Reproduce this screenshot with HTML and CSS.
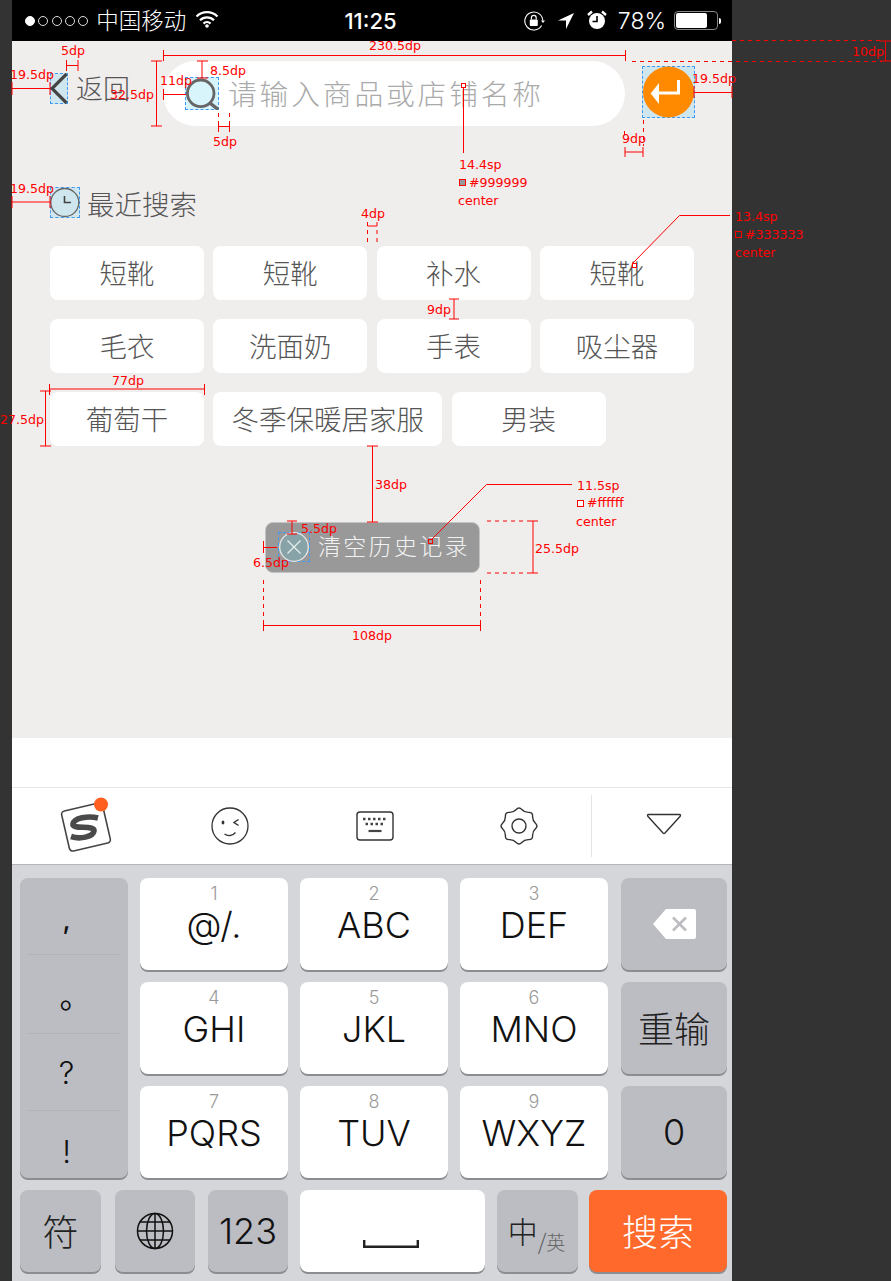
FILE: index.html
```html
<!DOCTYPE html>
<html lang="zh">
<head>
<meta charset="utf-8">
<title>搜索</title>
<link rel="stylesheet" href="styles.css">
</head>
<body>
<div class="phone">
  <div class="status">
    <div class="status-left">
      <div class="dots"><i class="dot on"></i><i class="dot"></i><i class="dot"></i><i class="dot"></i><i class="dot"></i></div>
      <span class="carrier">中国移动</span>
      <svg class="wifi" viewBox="0 0 24 18"><path d="M1.500 6.500a15 15 0 0 1 21 0M5 10.200a10 10 0 0 1 14 0M8.500 13.600a5 5 0 0 1 7 0" fill="none" stroke="#fff" stroke-width="2.200"/><circle cx="12" cy="16" r="1.800" fill="#fff"/></svg>
    </div>
    <span class="time">11:25</span>
    <div class="status-right">
      <svg class="st-lock" viewBox="0 0 22 20"><path d="M17.600 14.500A9 9 0 1 1 18.800 9.500" fill="none" stroke="#fff" stroke-width="1.100"/><path d="M17 9.500h4l-2 2.400z" fill="#fff"/><rect x="5.800" y="8.500" width="8" height="6.500" rx="1" fill="#fff"/><path d="M7.400 8.500V6.800a2.400 2.400 0 0 1 4.800 0v1.700" fill="none" stroke="#fff" stroke-width="1.200"/></svg>
      <svg class="st-arrow" viewBox="0 0 16 16"><path d="M16 0 0 7.500h8V16z" fill="#fff"/></svg>
      <svg class="st-alarm" viewBox="0 0 20 20"><circle cx="10" cy="11" r="8" fill="#fff"/><path d="M1 5 5 1.500M19 5l-4-3.500" stroke="#fff" stroke-width="2.400"/><path d="M10 6v5.500H5.500" fill="none" stroke="#000" stroke-width="1.600"/></svg>
      <span class="percent">78%</span>
      <div class="battery"><div class="battery-fill"></div></div>
      <div class="battery-nub"></div>
    </div>
  </div>

  <main class="content">
    <div class="search-row">
      <div class="spec-box back-box">
        <svg class="fill-icon" viewBox="0 0 18 31"><path d="M16.500 1 2 15.500 16.500 30" fill="none" stroke="#444" stroke-width="3.200"/></svg>
      </div>
      <span class="back-text">返回</span>
      <div class="pill">
        <div class="spec-box search-box">
          <svg class="fill-icon" viewBox="0 0 34 33"><circle cx="15.700" cy="16.300" r="13.300" fill="#d8f5fc" stroke="#666" stroke-width="2.800"/><path d="M25 26l8 6.500" stroke="#666" stroke-width="3.400"/></svg>
        </div>
        <span class="placeholder">请输入商品或店铺名称</span>
      </div>
      <div class="spec-box enter-box">
        <svg class="fill-icon" viewBox="0 0 53 52"><circle cx="26.500" cy="26" r="25.500" fill="#ff8a00"/><path d="M8.700 27.500 17 17v21z" fill="#fff"/><path d="M16 27h20.500V14" fill="none" stroke="#fff" stroke-width="3"/></svg>
      </div>
    </div>

    <div class="recent">
      <div class="spec-box clock-box">
        <svg class="fill-icon" viewBox="0 0 30 31"><circle cx="14.800" cy="15.500" r="14" fill="#cfe6ee" stroke="#666" stroke-width="1.300"/><path d="M14.500 9v6.500H21" fill="none" stroke="#444" stroke-width="1.600"/></svg>
      </div>
      <span class="recent-title">最近搜索</span>
    </div>

    <div class="tags">
      <span class="tag">短靴</span><span class="tag">短靴</span><span class="tag">补水</span><span class="tag">短靴</span>
      <span class="tag">毛衣</span><span class="tag">洗面奶</span><span class="tag">手表</span><span class="tag">吸尘器</span>
      <span class="tag">葡萄干</span><span class="tag tag-wide">冬季保暖居家服</span><span class="tag">男装</span>
    </div>

    <div class="clear">
      <div class="spec-box clear-box">
        <svg class="fill-icon" viewBox="0 0 32 30"><circle cx="16" cy="15" r="14.300" fill="#88a3a8" stroke="#e6e6e6" stroke-width="1.300"/><path d="M9.500 8.500l13 13M22.500 8.500l-13 13" stroke="#e6eeee" stroke-width="1.200"/></svg>
      </div>
      <span class="clear-text">清空历史记录</span>
    </div>
  </main>

  <div class="gap-white"></div>

  <div class="toolbar">
    <div class="tool">
      <svg class="tool-logo" viewBox="0 0 56 60"><rect x="7" y="9.500" width="42" height="41" rx="3.500" transform="rotate(-13 28 30)" fill="#fff" stroke="#444" stroke-width="1.600"/><path d="M40 21C30 18.500 16 21 15 27 14 33 37 27.500 36 34 35 40 22 42.500 13 39.500" fill="none" stroke="#4a4a4a" stroke-width="5.600"/><circle cx="43" cy="7.500" r="7" fill="#ff5f1f"/></svg>
    </div>
    <div class="tool">
      <svg class="tool-icon" viewBox="0 0 38 38"><circle cx="19" cy="19" r="18" fill="none" stroke="#333" stroke-width="1.300"/><ellipse cx="12" cy="15.500" rx="1.400" ry="2" fill="#333"/><path d="M27.500 12.500 23 15.500l4.500 3" fill="none" stroke="#333" stroke-width="1.500"/><path d="M13.500 27c3.500 2.500 8 2 11-1.500" fill="none" stroke="#333" stroke-width="1.300"/></svg>
    </div>
    <div class="tool">
      <svg class="tool-kbd" viewBox="0 0 38 30"><rect x="1" y="1" width="36" height="28" rx="3" fill="none" stroke="#333" stroke-width="1.400"/><path d="M7 8h24M9.500 13h19" fill="none" stroke="#444" stroke-width="2.400" stroke-dasharray="2.500 2.500"/><path d="M12.500 20h13" stroke="#444" stroke-width="2.200"/></svg>
    </div>
    <div class="tool">
      <svg class="tool-icon" viewBox="0 0 38 38"><path d="M16.220 2.550Q19 -.5 21.780 2.550Q24.550 5.600 28.670 5.400Q32.790 5.210 32.600 9.330Q32.400 13.450 35.450 16.220Q38.500 19 35.450 21.780Q32.400 24.550 32.600 28.670Q32.790 32.790 28.670 32.600Q24.550 32.400 21.780 35.450Q19 38.500 16.220 35.450Q13.450 32.400 9.330 32.600Q5.210 32.790 5.400 28.670Q5.600 24.550 2.550 21.780Q-.5 19 2.550 16.220Q5.600 13.450 5.400 9.330Q5.210 5.210 9.330 5.400Q13.450 5.600 16.220 2.550Z" fill="none" stroke="#333" stroke-width="1.400"/><circle cx="19" cy="19" r="7" fill="none" stroke="#333" stroke-width="1.400"/></svg>
    </div>
    <div class="tool tool-last">
      <svg class="tool-tri" viewBox="0 0 36 22"><path d="M2.500 1.500h31a1 1 0 0 1 .7 1.700L19 20a1.500 1.500 0 0 1-2 0L1.800 3.200a1 1 0 0 1 .7-1.700z" fill="none" stroke="#333" stroke-width="1.400"/></svg>
    </div>
  </div>

  <div class="keyboard">
    <div class="keys-top">
      <div class="side-key">
        <span class="side-cell sc-comma">,</span>
        <span class="side-cell sc-period">。</span>
        <span class="side-cell sc-q">?</span>
        <span class="side-cell sc-ex">!</span>
      </div>
      <div class="keys-grid">
        <div class="key"><span class="digit">1</span><span class="label">@/.</span></div>
        <div class="key"><span class="digit">2</span><span class="label">ABC</span></div>
        <div class="key"><span class="digit">3</span><span class="label">DEF</span></div>
        <div class="key key-gray key-center">
          <svg class="backspace" viewBox="0 0 43 30"><path d="M13 0h28a2 2 0 0 1 2 2v26a2 2 0 0 1-2 2H13L0 15z" fill="#fff"/><path d="M20 8.500l13 13M33 8.500l-13 13" stroke="#bcbdc2" stroke-width="2.600"/></svg>
        </div>
        <div class="key"><span class="digit">4</span><span class="label">GHI</span></div>
        <div class="key"><span class="digit">5</span><span class="label">JKL</span></div>
        <div class="key"><span class="digit">6</span><span class="label">MNO</span></div>
        <div class="key key-gray key-center"><span class="label-cjk">重输</span></div>
        <div class="key"><span class="digit">7</span><span class="label">PQRS</span></div>
        <div class="key"><span class="digit">8</span><span class="label">TUV</span></div>
        <div class="key"><span class="digit">9</span><span class="label">WXYZ</span></div>
        <div class="key key-gray key-center"><span class="label">0</span></div>
      </div>
    </div>
    <div class="keys-bottom">
      <div class="key key-gray key-center k-fu"><span class="label-cjk">符</span></div>
      <div class="key key-gray key-center k-globe">
        <svg class="globe" viewBox="0 0 38 38"><g fill="none" stroke="#111" stroke-width="1.500"><circle cx="19" cy="19" r="17.500"/><ellipse cx="19" cy="19" rx="8.500" ry="17.500"/><path d="M19 1.500v35M1.500 19h35M4 10h30M4 28h30"/></g></svg>
      </div>
      <div class="key key-gray key-center k-num"><span class="label">123</span></div>
      <div class="key key-center k-space"><svg class="space-glyph" viewBox="0 0 56 8"><path d="M1.200 0v6.800h53.600V0" fill="none" stroke="#222" stroke-width="2.400"/></svg></div>
      <div class="key key-gray key-center k-lang"><span class="lang-main">中</span><span class="lang-slash">/</span><span class="lang-sub">英</span></div>
      <div class="key key-center k-go"><span class="go-text">搜索</span></div>
    </div>
  </div>
</div>

<svg class="redlines" viewBox="0 0 891 1281" width="891" height="1281">
  <g class="rl">
    <path d="M163.500 55.500H625.500M163.500 50V61M625.500 50V61"/>
    <path d="M66.500 65.500H78M66.500 60V71M78 60V71"/>
    <path d="M12 88.500H50M12 82V95M50 82V95"/>
    <path d="M156.500 61V126M151 61H162M151 126H162"/>
    <path d="M163.500 94.500H186M163.500 89V100"/>
    <path d="M202 61V78M197 61H208M197 78H208"/>
    <path d="M218.500 126.500H229.500M218.500 121V132M229.500 121V132"/>
    <path d="M463.500 87V153"/>
    <path d="M694 92.500H732M694 86V98M732 86V98"/>
    <path d="M625 152H643M625 147V157M643 147V157"/>
    <path d="M12 202H50M12 196V208M50 196V208"/>
    <path d="M367.500 226H377"/>
    <path d="M633 263 679.500 215.500H730"/>
    <path d="M454 299V319M449 299H459M449 319H459"/>
    <path d="M49.500 389H204.500M49.500 384V395M204.500 384V395"/>
    <path d="M45.500 391V446M40 391H51M40 446H51"/>
    <path d="M372.500 446V522M367 446H378M367 522H378"/>
    <path d="M431 540 486.500 484.500H572"/>
    <path d="M292 521V534M287 521H297M287 534H297"/>
    <path d="M263.500 547.500H277M263.500 541V553"/>
    <path d="M533 521V573M528 521H538M528 573H538"/>
    <path d="M263.500 625.500H480.500M263.500 620V631M480.500 620V631"/>
    <path d="M885.500 41V61M880 41H891M880 61H891"/>
  </g>
  <g class="rl-dash">
    <path d="M732 40.500H882M632 61.500H882"/>
    <path d="M218.500 113V121M229.500 113V121"/>
    <path d="M643.500 120V146M624.500 131V140"/>
    <path d="M367.500 222V242M377 222V242"/>
    <path d="M487 521H528M487 573H528"/>
    <path d="M263.500 580V620M480.500 580V620"/>
  </g>
  <g class="rl-sq">
    <rect x="461.500" y="83.500" width="4" height="4" fill="#fff"/>
    <rect x="459.500" y="179.500" width="6" height="6" fill="#999"/>
    <rect x="632.500" y="263.500" width="4" height="4" fill="#fff"/>
    <rect x="735.500" y="231.500" width="6" height="6" fill="#333"/>
    <rect x="428.500" y="539.500" width="4" height="4" fill="#999"/>
    <rect x="577.500" y="500.500" width="6" height="6" fill="#fff"/>
  </g>
  <g class="rl-text">
    <text x="369" y="50">230.5dp</text>
    <text x="61" y="55">5dp</text>
    <text x="10" y="79">19.5dp</text>
    <text x="110" y="99">32.5dp</text>
    <text x="160" y="85">11dp</text>
    <text x="210" y="75">8.5dp</text>
    <text x="213" y="146">5dp</text>
    <text x="459" y="169">14.4sp</text>
    <text x="469" y="187">#999999</text>
    <text x="458" y="205">center</text>
    <text x="692" y="83">19.5dp</text>
    <text x="622" y="143">9dp</text>
    <text x="852" y="56">10dp</text>
    <text x="10" y="193">19.5dp</text>
    <text x="361" y="218">4dp</text>
    <text x="735" y="221">13.4sp</text>
    <text x="745" y="239">#333333</text>
    <text x="735" y="257">center</text>
    <text x="427" y="314">9dp</text>
    <text x="112" y="385">77dp</text>
    <text x="0" y="424">27.5dp</text>
    <text x="375" y="489">38dp</text>
    <text x="577" y="490">11.5sp</text>
    <text x="587" y="507">#ffffff</text>
    <text x="576" y="526">center</text>
    <text x="301" y="533">5.5dp</text>
    <text x="253" y="567">6.5dp</text>
    <text x="535" y="553">25.5dp</text>
    <text x="352" y="640">108dp</text>
  </g>
</svg>
</body>
</html>
```

FILE: styles.css
```css
* { box-sizing: border-box; }
html, body { margin: 0; padding: 0; }
body {
  position: relative;
  width: 891px;
  height: 1281px;
  overflow: hidden;
  background: #333;
  font-family: "Noto Sans CJK SC", "Noto Sans", sans-serif;
}
.phone {
  width: 720px;
  margin-left: 12px;
  display: flex;
  flex-direction: column;
  height: 1281px;
}

/* status bar */
.status {
  height: 41px;
  flex: none;
  background: #000;
  color: #fff;
  display: flex;
  align-items: center;
  padding: 0 11px 0 13px;
}
.status-left, .status-right { flex: 1; display: flex; align-items: center; }
.status-right { justify-content: flex-end; }
.dots { display: flex; gap: 3.300px; }
.dot { width: 10px; height: 10px; border-radius: 50%; border: 1px solid #ddd; }
.dot.on { background: #fff; border-color: #fff; }
.carrier { font-size: 22.500px; font-weight: 300; margin-left: 8px; line-height: 26px; padding-bottom: 4px; }
.wifi { width: 24px; height: 18px; margin-left: 9px; margin-top: -3px; }
.time { font-family: Inter, sans-serif; font-size: 22px; font-weight: 500; margin-right: 5px; }
.st-lock { width: 22px; height: 20px; }
.st-arrow { width: 16px; height: 16px; margin-left: 12px; }
.st-alarm { width: 20px; height: 20px; margin-left: 13px; margin-top: -2px; }
.percent { font-family: Inter, sans-serif; font-size: 23px; font-weight: 300; margin-left: 11px; }
.battery {
  width: 44px; height: 19px; margin-left: 8px;
  border: 1.500px solid #888; border-radius: 4px; padding: 1px;
}
.battery-fill { width: 31px; height: 100%; background: #fff; border-radius: 2px; }
.battery-nub { width: 2px; height: 6px; background: #fff; margin-left: 1px; border-radius: 0 2px 2px 0; }

/* content */
.content {
  height: 697px;
  flex: none;
  background: #f0eded;
  padding: 20px 0 0 38px;
  display: flex;
  flex-direction: column;
}
.spec-box { flex: none; background: #cfe6ee; border: 1px dashed #3d9bf5; position: relative; }
.fill-icon { position: absolute; left: -1px; top: -1px; width: calc(100% + 2px); height: calc(100% + 2px); display: block; }
.search-row { display: flex; align-items: flex-start; height: 65px; flex: none; }
.back-box { width: 18px; height: 31px; margin-top: 12px; }
.back-text { font-size: 27px; font-weight: 300; color: #555; margin-left: 8px; line-height: 32px; margin-top: 11px; width: 55px; white-space: nowrap; }
.pill {
  width: 462px; height: 65px; margin-left: 32px;
  background: #fff; border-radius: 33px;
  display: flex; align-items: center; padding-left: 22px;
}
.search-box { width: 34px; height: 33px; background: #d8f5fc; }
.placeholder { font-size: 28.800px; font-weight: 300; letter-spacing: 2.800px; color: #aaa; margin-left: 9px; padding-bottom: 2px; white-space: nowrap; }
.enter-box { width: 53px; height: 52px; margin-left: 17px; margin-top: 5px; }
.recent { display: flex; align-items: center; margin-top: 61px; height: 31px; flex: none; }
.clock-box { width: 30px; height: 31px; }
.recent-title { font-size: 27.500px; font-weight: 300; color: #555; margin-left: 7px; white-space: nowrap; }
.tags { display: flex; flex-wrap: wrap; gap: 19px 9.300px; margin-top: 28px; width: 650px; flex: none; }
.tag {
  width: 154px; height: 54px; background: #fff; border-radius: 8px;
  display: flex; align-items: center; justify-content: center;
  padding-bottom: 3px;
  font-size: 27.500px; font-weight: 300; color: #555; white-space: nowrap;
}
.tag-wide { width: 229px; }
.clear {
  margin: 76px 0 0 215px; width: 215px; height: 51px; flex: none;
  background: #999; border: 1px solid #c4c4c4; border-radius: 8px;
  display: flex; align-items: center; padding-left: 12px;
}
.clear-box { width: 32px; height: 30px; margin-top: -1px; background: transparent; }
.clear-text { font-size: 23px; font-weight: 300; letter-spacing: 2.300px; color: #f2f2f2; margin-left: 8px; padding-bottom: 5px; white-space: nowrap; }

.gap-white { height: 49px; flex: none; background: #fff; }

/* toolbar */
.toolbar {
  height: 78px; flex: none; background: #fff;
  border-top: 1px solid #e6e6e6; border-bottom: 1px solid #b5b5b9;
  display: grid; grid-template-columns: repeat(5, 144.500px);
  padding-left: 1.500px; align-items: center;
}
.tool { display: flex; align-items: center; justify-content: center; position: relative; }
.tool-last { height: 62px; border-left: 1px solid #e4e4e4; margin-left: -1px; }
.tool-logo { width: 56px; height: 60px; display: block; margin-top: 1px; }
.tool-icon { width: 38px; height: 38px; display: block; }
.tool-kbd { width: 38px; height: 30px; display: block; }
.tool-tri { width: 36px; height: 22px; display: block; margin-top: -4px; }

/* keyboard */
.keyboard {
  height: 416px; flex: none; background: #d5d6da;
  padding: 13px 5px 0 8px;
}
.keys-top { display: flex; gap: 12px; }
.side-key {
  width: 108px; height: 300px; flex: none;
  background: #bcbdc2; border-radius: 8px;
  box-shadow: 0 2px 0 #8c8d90;
  display: flex; flex-direction: column; padding: 0 7px;
}
.side-cell {
  flex: none; height: 77px; display: flex; align-items: center; justify-content: center;
  padding-right: 15px;
  font-family: Inter, sans-serif; font-weight: 300; color: #111;
  border-bottom: 1px solid #b2b3b8;
}
.sc-comma { font-size: 27px; font-weight: 500; padding-top: 6px; }
.sc-period { height: 79px; font-family: "Noto Sans CJK SC", sans-serif; font-size: 32px; font-weight: 400; padding-right: 0; padding-left: 3px; }
.sc-q { font-size: 31px; }
.sc-ex { flex: 1; height: auto; font-size: 31px; padding-top: 14px; border-bottom: 0; }
.keys-grid { display: grid; grid-template-columns: 148px 148px 148px 106px; column-gap: 12px; row-gap: 12px; grid-auto-rows: 92px; flex: none; }
.keys-grid .key-gray { margin-left: 1px; margin-right: -1px; }
.key {
  background: #fff; border-radius: 8px; box-shadow: 0 2px 0 #8c8d90;
  display: flex; flex-direction: column; align-items: center;
  padding-top: 6px; color: #111;
}
.key-gray { background: #bcbdc2; }
.key-center { justify-content: center; padding-top: 0; }
.digit { font-family: Inter, sans-serif; font-weight: 300; font-size: 18px; line-height: 20px; color: #9a9a9a; }
.label { font-family: Inter, sans-serif; font-weight: 300; font-size: 36px; line-height: 43px; white-space: nowrap; }
.label-cjk { font-weight: 300; font-size: 36px; line-height: 44px; color: #222; padding-bottom: 3px; }
.backspace { width: 43px; height: 30px; display: block; }
.keys-bottom { display: flex; margin-top: 12px; height: 84px; }
.keys-bottom .key { height: 82px; flex: none; flex-direction: row; }
.k-fu { width: 81px; }
.k-globe { width: 80px; margin-left: 14px; }
.k-num { width: 80px; margin-left: 13px; }
.k-space { width: 185px; margin-left: 12px; align-items: flex-end; padding-bottom: 24px; padding-right: 3px; }
.k-lang { width: 81px; margin-left: 11.500px; align-items: center; padding-right: 1px; }
.k-go { width: 138px; margin-left: 11.500px; background: #ff6a2c; }
.globe { width: 38px; height: 38px; display: block; }
.space-glyph { width: 56px; height: 8px; display: block; }
.lang-main { font-size: 30px; font-weight: 300; color: #222; line-height: 40px; padding-bottom: 2px; }
.lang-slash { font-size: 22px; font-weight: 300; color: #555; margin-top: 18px; }
.lang-sub { font-size: 19px; font-weight: 300; color: #666; margin-top: 20px; }
.go-text { font-size: 36px; font-weight: 300; color: #fff; padding-bottom: 3px; }

/* redline overlay */
.redlines { position: absolute; left: 0; top: 0; pointer-events: none; }
.rl path { fill: none; stroke: #f00; stroke-width: 1; }
.rl-dash path { fill: none; stroke: #f00; stroke-width: 1; stroke-dasharray: 4 4; }
.rl-sq rect { stroke: #f00; stroke-width: 1; }
.rl-text text { font-family: "DejaVu Sans", sans-serif; font-size: 12.600px; fill: #f00; }
```
